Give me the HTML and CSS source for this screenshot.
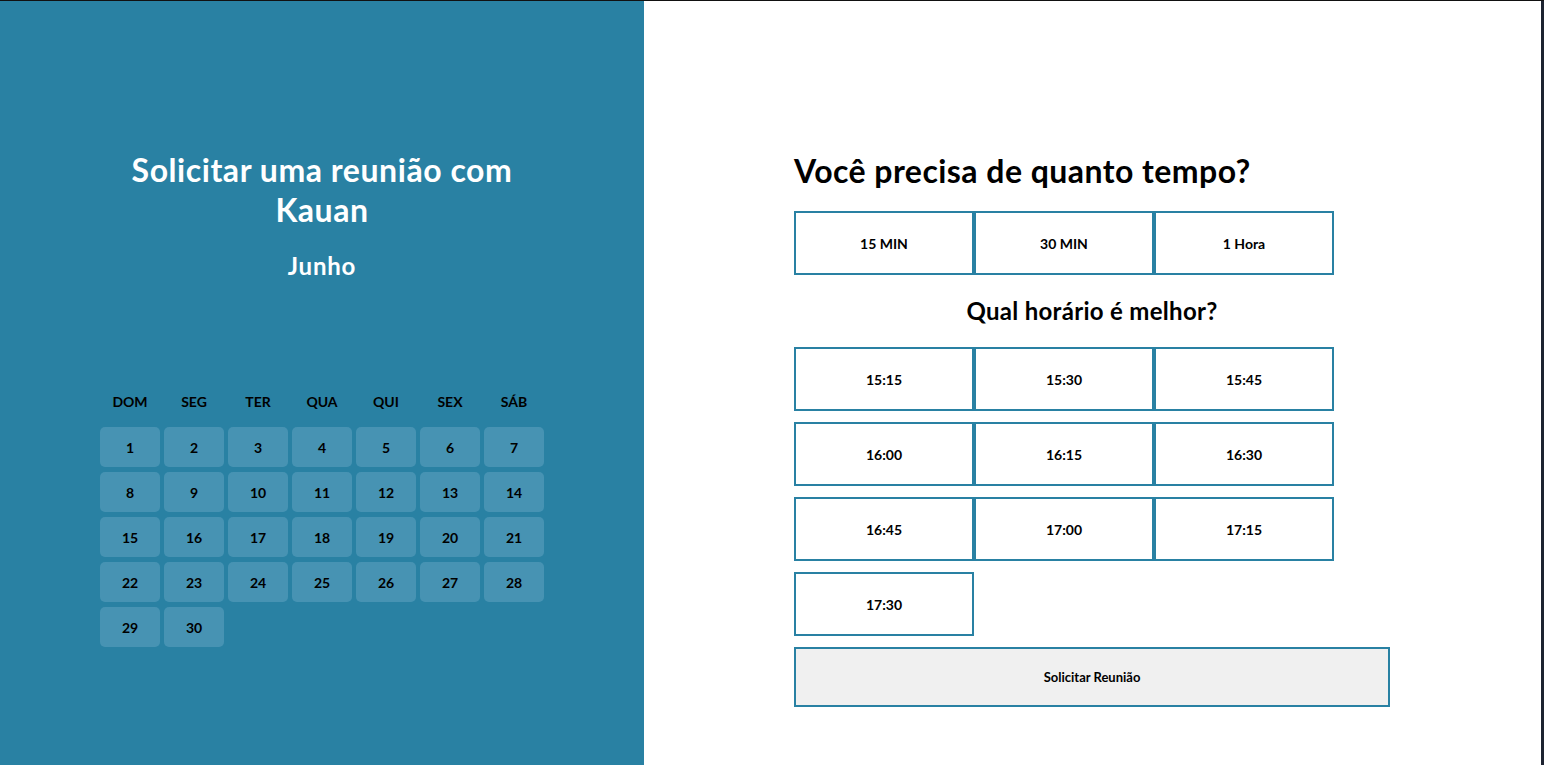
FILE: index.html
```html
<!DOCTYPE html>
<html lang="pt-BR">
<head>
<meta charset="utf-8">
<title>Solicitar reunião</title>
<link rel="stylesheet" href="styles.css">
</head>
<body>
<div class="page">
  <aside class="left">
    <h1 class="title">Solicitar uma reunião com Kauan</h1>
    <h2 class="month">Junho</h2>
    <div class="calendar">
      <div class="weekdays">
        <span>DOM</span><span>SEG</span><span>TER</span><span>QUA</span><span>QUI</span><span>SEX</span><span>SÁB</span>
      </div>
      <div class="days">
        <div class="day">1</div><div class="day">2</div><div class="day">3</div><div class="day">4</div><div class="day">5</div><div class="day">6</div><div class="day">7</div>
        <div class="day">8</div><div class="day">9</div><div class="day">10</div><div class="day">11</div><div class="day">12</div><div class="day">13</div><div class="day">14</div>
        <div class="day">15</div><div class="day">16</div><div class="day">17</div><div class="day">18</div><div class="day">19</div><div class="day">20</div><div class="day">21</div>
        <div class="day">22</div><div class="day">23</div><div class="day">24</div><div class="day">25</div><div class="day">26</div><div class="day">27</div><div class="day">28</div>
        <div class="day">29</div><div class="day">30</div>
      </div>
    </div>
  </aside>
  <main class="right">
    <div class="form">
      <h2 class="question">Você precisa de quanto tempo?</h2>
      <div class="options">
        <div class="option">15 MIN</div>
        <div class="option">30 MIN</div>
        <div class="option">1 Hora</div>
      </div>
      <h3 class="subquestion">Qual horário é melhor?</h3>
      <div class="slots">
        <div class="option">15:15</div>
        <div class="option">15:30</div>
        <div class="option">15:45</div>
        <div class="option">16:00</div>
        <div class="option">16:15</div>
        <div class="option">16:30</div>
        <div class="option">16:45</div>
        <div class="option">17:00</div>
        <div class="option">17:15</div>
        <div class="option">17:30</div>
      </div>
      <button class="submit" type="button">Solicitar Reunião</button>
    </div>
  </main>
</div>
</body>
</html>
```

FILE: styles.css
```css
* { box-sizing: border-box; }
html, body { margin: 0; padding: 0; }
body {
  font-family: "Lato", "Open Sans", sans-serif;
  font-weight: 700;
  color: #000;
  background: #fff;
}
.page {
  display: flex;
  height: 765px;
  border-top: 1px solid #111;
  overflow: hidden;
}
.left {
  width: 644px;
  flex: none;
  background: #2981a3;
  text-align: center;
  padding-top: 149px;
}
.title {
  margin: 0 auto;
  width: 440px;
  font-size: 32px;
  line-height: 40px;
  font-weight: 700;
  letter-spacing: 0.55px;
  color: #fff;
}
.month {
  margin: 24px 0 0;
  font-size: 24px;
  line-height: 24px;
  font-weight: 700;
  letter-spacing: 0.8px;
  color: #fff;
}
.calendar {
  width: 444px;
  margin: 114px auto 0;
}
.weekdays, .days {
  display: grid;
  grid-template-columns: repeat(7, 60px);
  column-gap: 4px;
}
.weekdays {
  font-size: 14px;
  line-height: 20px;
  height: 20px;
  margin-bottom: 15px;
}
.days { row-gap: 5px; }
.day {
  height: 40px;
  border-radius: 5px;
  background: #4793b3;
  font-size: 14px;
  display: flex;
  align-items: center;
  justify-content: center;
}
.right {
  flex: 1;
  background: #fff;
  border-right: 3px solid #1d2331;
  padding-top: 150px;
}
.form {
  width: 596px;
  margin-left: 150px;
}
.question {
  margin: 0 0 20px;
  font-size: 32px;
  line-height: 40px;
  font-weight: 700;
  letter-spacing: 0.45px;
}
.options, .slots {
  display: grid;
  grid-template-columns: repeat(3, 180px);
}
.slots { row-gap: 11px; }
.option {
  height: 64px;
  border: 2px solid #2981a3;
  display: flex;
  align-items: center;
  justify-content: center;
  font-size: 14px;
}
.subquestion {
  margin: 22px 0 22px;
  text-align: center;
  font-size: 24px;
  line-height: 28px;
  font-weight: 700;
  letter-spacing: 0.3px;
}
.submit {
  display: block;
  width: 596px;
  height: 60px;
  margin-top: 11px;
  border: 2px solid #2981a3;
  background: #f0f0f0;
  font-family: inherit;
  font-weight: 700;
  font-size: 13px;
  color: #000;
  padding: 0;
}
```
